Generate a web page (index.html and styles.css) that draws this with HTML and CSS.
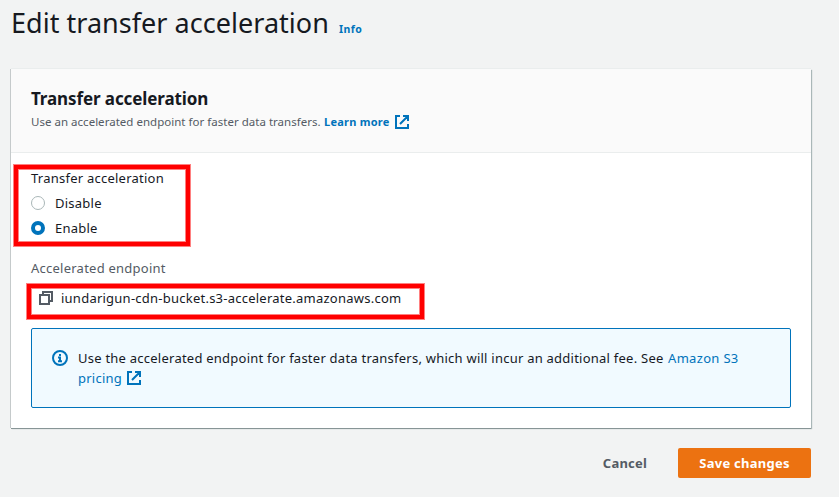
FILE: index.html
```html
<!DOCTYPE html>
<html lang="en">
<head>
<meta charset="utf-8">
<title>Edit transfer acceleration</title>
<link rel="stylesheet" href="styles.css">
</head>
<body>
<main class="page">
  <header class="page-header">
    <h1 class="title">Edit transfer acceleration</h1>
    <a class="info">Info</a>
  </header>
  <section class="card">
    <div class="card-header">
      <h2 class="card-title">Transfer acceleration</h2>
      <p class="description"><span class="desc-text">Use an accelerated endpoint for faster data transfers.</span><a class="learn">Learn more</a><svg class="external" viewBox="0 0 16 16"><path d="M6 2H2v12h12v-4M9 2h5v5M6 10l7.5-7.5"/></svg></p>
    </div>
    <div class="card-body">
      <div class="group">
        <div class="label">Transfer acceleration</div>
        <div class="option"><span class="radio"></span><span class="disable">Disable</span></div>
        <div class="option"><span class="radio checked"></span><span class="enable">Enable</span></div>
        <div class="mark mark-options"></div>
      </div>
      <div class="endpoint-label"><span>Accelerated endpoint</span></div>
      <div class="endpoint">
        <svg class="copy" viewBox="0 0 16 16"><path d="M2 5h9v9H2zM5 5V2h9v9h-3"/></svg>
        <span class="host">iundarigun-cdn-bucket.s3-accelerate.amazonaws.com</span>
        <div class="mark mark-endpoint"></div>
      </div>
      <div class="alert">
        <svg class="info-icon" viewBox="0 0 16 16"><circle cx="8" cy="8" r="7"/><path d="M8 4v2M6 7.5h2V11M6 11.2h4"/></svg>
        <div class="alert-text">
          <div class="alert-line"><span class="alert-copy">Use the accelerated endpoint for faster data transfers, which will incur an additional fee. See</span><a class="amazon">Amazon S3</a></div>
          <div class="alert-line"><a class="pricing">pricing</a><svg class="external" viewBox="0 0 16 16"><path d="M6 2H2v12h12v-4M9 2h5v5M6 10l7.5-7.5"/></svg></div>
        </div>
      </div>
    </div>
  </section>
  <footer class="actions">
    <button class="cancel"><span>Cancel</span></button>
    <button class="save"><span>Save changes</span></button>
  </footer>
</main>
</body>
</html>
```
FILE: styles.css
```css
* { box-sizing: border-box; }
body { margin: 0; height: 497px; overflow: hidden; background: #f2f3f3; color: #16191f; font: 13px/20px "Noto Sans", sans-serif; letter-spacing: .24px; }
h1, h2, p { margin: 0; font-weight: 400; }
a { color: #0073bb; }
span, a, h1, h2 { white-space: nowrap; }
.page { width: 800px; margin-left: 11px; }
.page-header { display: flex; align-items: baseline; height: 69px; padding-top: 5px; }
.title { font-size: 27px; line-height: 36px; width: 328px; letter-spacing: .03px; }
.info { font-size: 10.5px; font-weight: 700; letter-spacing: .4px; }
.card { height: 359px; background: #fff; box-shadow: 0 1px 0 #879596, 1px 1px 1px #aab7b8, -1px 0 0 #c5cacb, 0 -1px 0 #eaeded; }
.card-header { height: 84px; padding: 19px 20px 0; background: #fafafa; border-bottom: 1px solid #eaeded; }
.card-title { font-size: 17px; line-height: 22px; font-weight: 700; letter-spacing: -.1px; }
.description { display: flex; align-items: center; height: 24px; font-size: 11.5px; letter-spacing: .02px; color: #545b64; }
.desc-text { width: 293px; }
.learn { width: 70px; font-size: 11px; font-weight: 700; letter-spacing: .25px; }
svg { flex: none; fill: none; }
.external { width: 16px; height: 16px; stroke: #0073bb; stroke-width: 2; }
.card-body { padding: 15px 20px 0; }
.group { position: relative; height: 90px; }
.label { height: 22px; }
.option { display: flex; align-items: center; height: 25px; gap: 10px; }
.radio { width: 14px; height: 14px; border: 1px solid #aab7b8; border-radius: 50%; background: #fff; }
.checked { border: 4px solid #0073bb; }
.endpoint-label { color: #545b64; }
.endpoint { position: relative; display: flex; align-items: center; height: 20px; margin-top: 10px; padding-left: 7px; }
.copy { width: 16px; height: 16px; margin-right: 7px; stroke: #545b64; stroke-width: 2; }
.mark { position: absolute; border: 4px solid #f00; outline: 1px solid #ff8080; box-shadow: inset 0 0 0 1px #ff8080; }
.mark-options { left: -17px; top: -3px; width: 176px; height: 81px; }
.mark-endpoint { left: -4px; top: -4px; width: 397px; height: 35px; }
.alert { display: flex; height: 80px; margin-top: 20px; padding: 19px 20px 0; background: #f1faff; border: 1px solid #0073bb; border-radius: 2px; }
.info-icon { width: 16px; height: 16px; margin: 2px 10px 0 0; stroke: #0073bb; stroke-width: 2; }
.alert-line { display: flex; align-items: center; height: 20px; }
.alert-copy { width: 590px; }
.amazon { letter-spacing: .32px; }
.pricing { width: 48px; }
.actions { display: flex; justify-content: flex-end; margin-top: 20px; }
button { height: 30px; padding: 0; border: 0; border-radius: 2px; font: 700 13px/20px "Noto Sans", sans-serif; letter-spacing: .25px; }
.cancel { width: 86px; margin-right: 10px; background: none; color: #545b64; }
.save { width: 133px; background: #ec7211; color: #fff; }
```
